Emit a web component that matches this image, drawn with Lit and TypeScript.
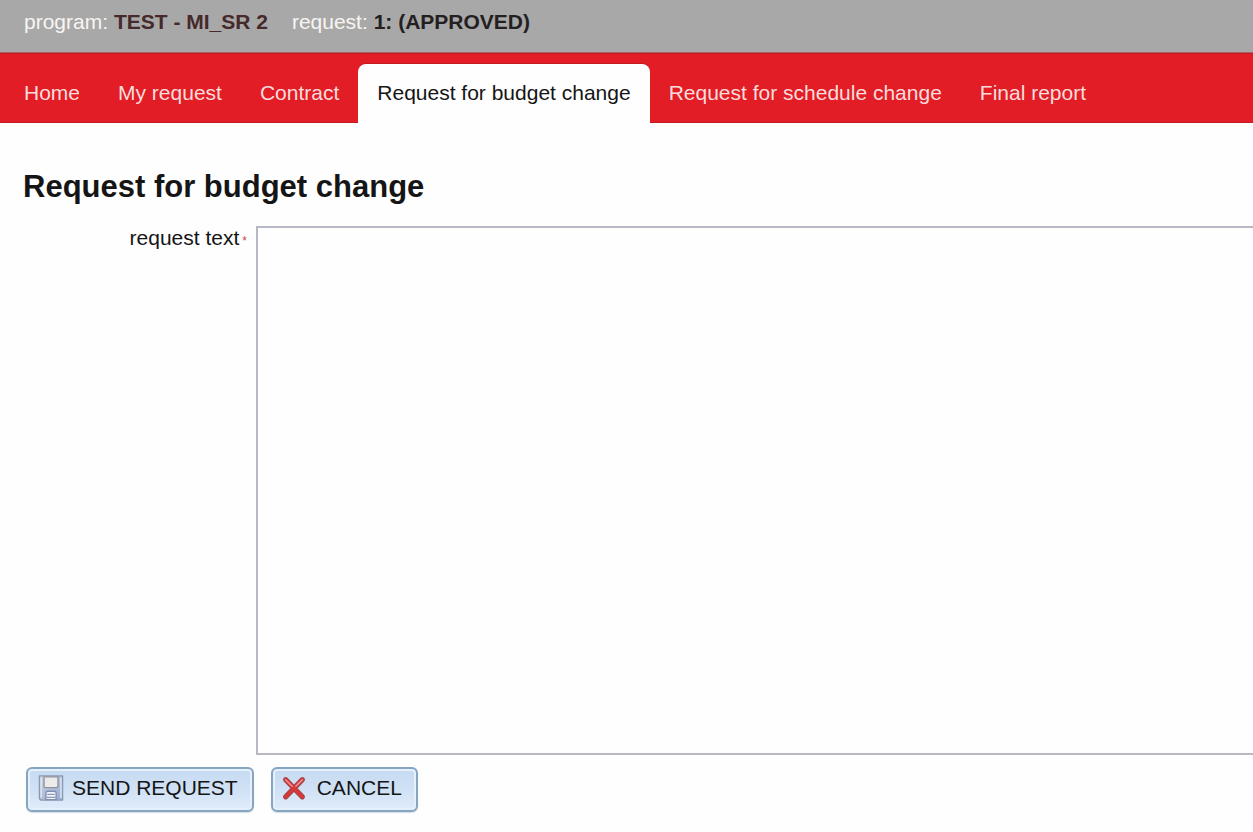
import { LitElement, html, css, svg } from "lit";
import { customElement, state } from "lit/decorators.js";

const saveIcon = svg`
  <svg class="icon" viewBox="0 0 28 28" aria-hidden="true">
    <defs>
      <linearGradient id="disk" x1="0" y1="0" x2="1" y2="1">
        <stop offset="0" stop-color="#ccd1da" />
        <stop offset="1" stop-color="#97abd2" />
      </linearGradient>
    </defs>
    <path d="M1.500 1H26.500V27H3L1.500 25.500Z" fill="url(#disk)" stroke="#8c99b5" stroke-width="1.400" stroke-linejoin="round" />
    <path d="M3.500 3V24.500M24.700 3V25" stroke="#dce5f2" stroke-width="1.600" />
    <path d="M6.500 2H21.500V11.500Q21.500 13.500 19.500 13.500H8.500Q6.500 13.500 6.500 11.500Z" fill="#ecebea" stroke="#8f939e" stroke-width="1.400" />
    <path d="M8.500 26.500V19.500Q8.500 17.500 10.500 17.500H17.500Q19.500 17.500 19.500 19.500V26.500Z" fill="#eef1f7" stroke="#7f8fb0" stroke-width="1.400" />
    <path d="M10 20.800H18M9 24H19" stroke="#8f9cb8" stroke-width="1.400" />
  </svg>`;

const cancelIcon = svg`
  <svg class="icon" viewBox="0 0 28 28" aria-hidden="true">
    <path d="M5 5L23 23.500M23 5L5 23.500" stroke="#a8434a" stroke-width="5.600" stroke-linecap="round" />
    <path d="M5 5L23 23.500M23 5L5 23.500" stroke="#d6383a" stroke-width="3.400" stroke-linecap="round" />
    <path d="M5 5L12 12M23 5L16 12" stroke="#eb9a98" stroke-width="1.500" stroke-linecap="round" />
  </svg>`;

@customElement("app-root")
export class AppRoot extends LitElement {
  static styles = css`
    :host {
      display: block;
      overflow: hidden;
      background: #fefefe;
      color: #151515;
      font: 21px/24px "Liberation Sans", Arial, sans-serif;
    }
    .context {
      display: flex;
      gap: 24px;
      padding: 10px 24px 18px;
      background: #a8a8a8;
      border-bottom: 1px solid #b06468;
      color: #f8f5f1;
    }
    .program { color: #46292a; }
    .request { color: #242020; }
    .tabs {
      display: flex;
      align-items: flex-end;
      padding: 11px 5px 0;
      background: #e21d25;
      box-shadow: inset 0 1px #b91c22, inset 0 -1px #c41a21;
    }
    .tab {
      padding: 17px 19px 18px;
      color: #fbdcdc;
      text-decoration: none;
      white-space: nowrap;
    }
    .tab.active {
      background: #fefefe;
      color: #151515;
      border-radius: 8px 8px 0 0;
      box-shadow: 0 -1px #c41a21;
    }
    main { padding: 46px 0 18px 23px; }
    h1 {
      margin: 0;
      font-size: 31px;
      line-height: 36px;
    }
    .field {
      display: flex;
      align-items: flex-start;
      margin-top: 21px;
    }
    .label {
      width: 224px;
      flex: none;
      text-align: right;
      margin-right: 9px;
    }
    .required {
      color: #c44848;
      font-size: 12px;
      margin-left: 3px;
    }
    .text {
      flex: 1;
      min-width: 0;
      box-sizing: border-box;
      height: 529px;
      margin: 0 -2px 0 0;
      padding: 6px;
      border: 2px solid #b6b8c4;
      background: #fefefe;
      font: inherit;
      resize: none;
      outline: none;
    }
    .actions {
      display: flex;
      gap: 17px;
      padding: 12px 3px 0;
    }
    .button {
      display: flex;
      align-items: center;
      height: 45px;
      padding: 0 14px 4px 10px;
      border: 2px solid #86a5c3;
      border-radius: 6px;
      background: linear-gradient(#c5daf1, #d0e1f5 50%, #e0ecfa);
      box-shadow: inset 0 0 0 2px #e5f0fb, 0 1px 1px #d5dce3;
      color: #151515;
      font: inherit;
      text-transform: uppercase;
      cursor: pointer;
    }
    .icon {
      width: 26px;
      height: 26px;
      fill: none;
      margin-right: 8px;
    }
    .cancel { padding-left: 8px; }
    .cancel .icon { margin-right: 10px; }
  `;

  @state() private active = 3;

  private tabs = [
    "Home",
    "My request",
    "Contract",
    "Request for budget change",
    "Request for schedule change",
    "Final report",
  ];

  private select(event: Event, index: number) {
    event.preventDefault();
    this.active = index;
  }

  render() {
    return html`
      <header class="context">
        <span>program: <b class="program">TEST - MI_SR 2</b></span>
        <span>request: <b class="request">1: (APPROVED)</b></span>
      </header>
      <nav class="tabs">
        ${this.tabs.map(
          (name, i) => html`<a
            class="tab ${i === this.active ? "active" : ""}"
            href="#"
            @click=${(e: Event) => this.select(e, i)}
          >${name}</a>`
        )}
      </nav>
      <main>
        <h1>Request for budget change</h1>
        <form @submit=${(e: Event) => e.preventDefault()}>
          <div class="field">
            <label class="label" for="request-text">request text<span class="required">*</span></label>
            <textarea class="text" id="request-text" required></textarea>
          </div>
          <div class="actions">
            <button class="button" type="submit">${saveIcon}Send request</button>
            <button class="button cancel" type="reset">${cancelIcon}Cancel</button>
          </div>
        </form>
      </main>
    `;
  }
}
